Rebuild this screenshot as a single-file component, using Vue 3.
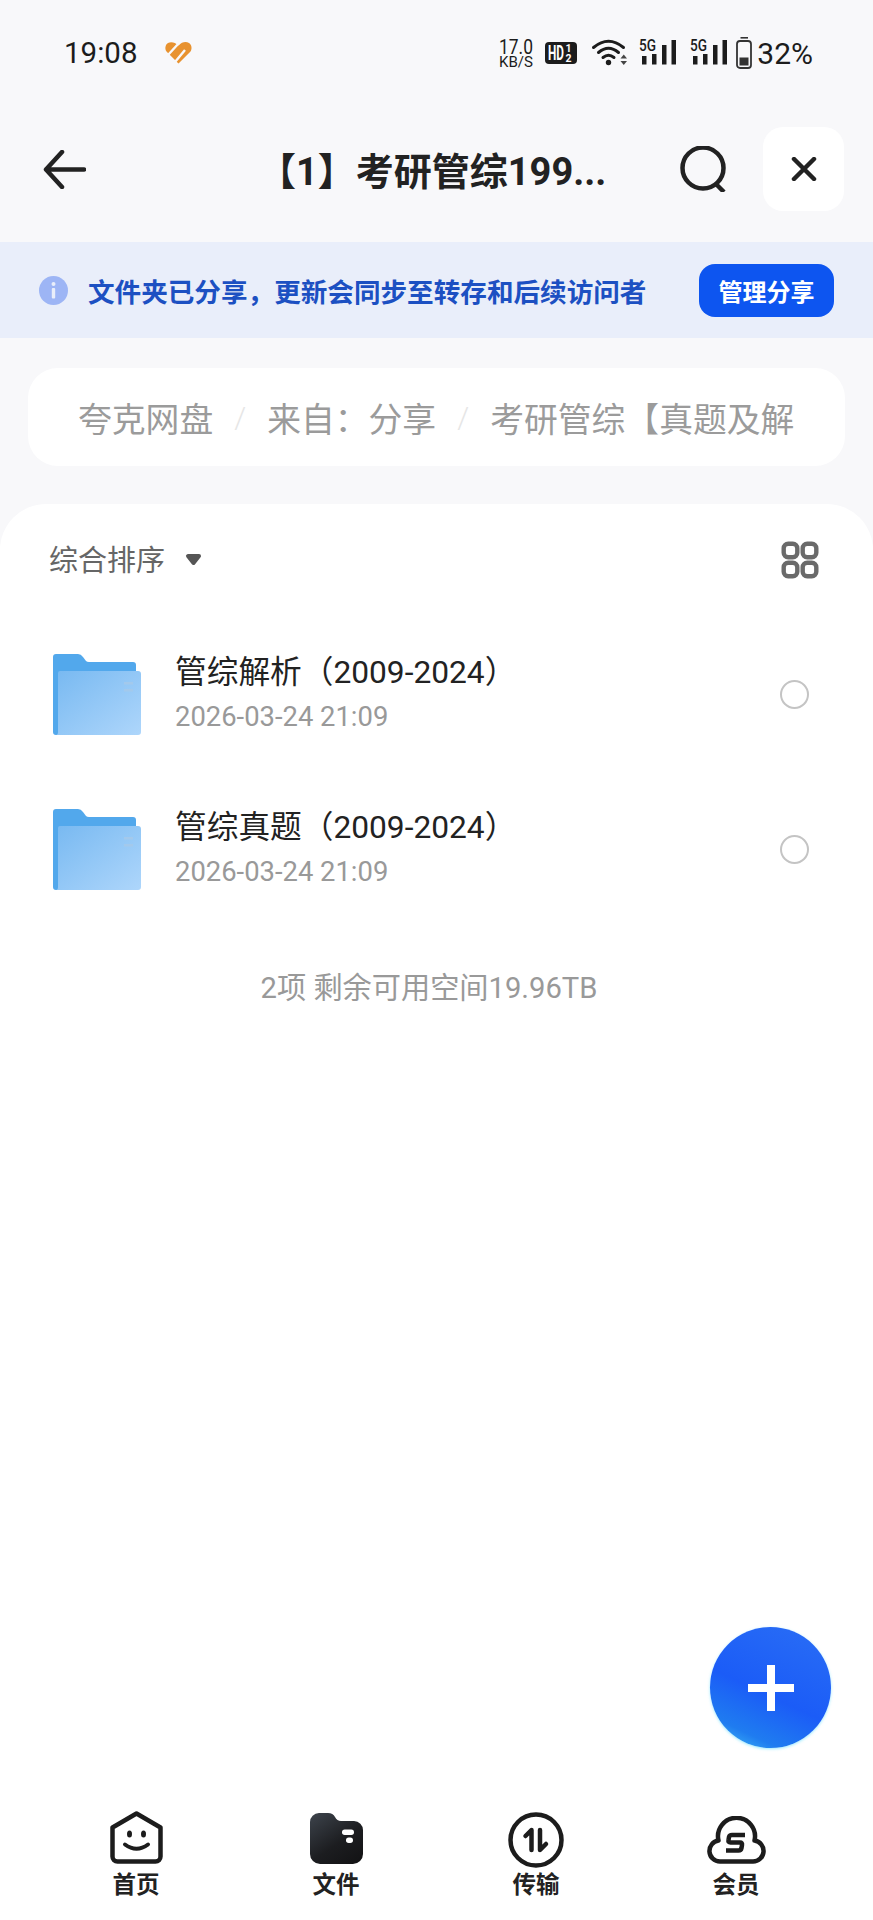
<script setup>
const crumbs = ['夸克网盘', '来自：分享', '考研管综【真题及解']
const folders = [
  { name: '管综解析（2009-2024）', date: '2026-03-24 21:09' },
  { name: '管综真题（2009-2024）', date: '2026-03-24 21:09' }
]
</script>

<template>
  <div class="page">
    <div class="status">
      <span class="time">19:08</span>
      <svg class="heart" width="27" height="22" viewBox="0 0 27 22">
        <path d="M13.5 21.5 1.5 9.5C-.5 7 .3 2.5 3 1c3-1.700 7-.8 10.500 2.500C17-.3 21-.9 24 1c2.800 1.800 3.300 6 1.500 8.500Z" fill="#e8922f" />
        <path d="M3 13 14 1M10 20 20 8" stroke="#f8f8fa" stroke-width="2.400" />
      </svg>
      <svg class="speed" width="36" height="30" viewBox="0 0 36 30">
        <text x="1" y="16" font-size="21" fill="#1c1c1c" textLength="34" lengthAdjust="spacingAndGlyphs">17.0</text>
        <text x="1" y="29" font-size="15" fill="#1c1c1c" textLength="34" lengthAdjust="spacingAndGlyphs">KB/S</text>
      </svg>
      <svg class="hd" width="32" height="22" viewBox="0 0 32 22">
        <rect width="32" height="22" rx="4" fill="#1c1c1c" />
        <text x="3" y="18" font-size="20" font-weight="700" fill="#fff" textLength="16" lengthAdjust="spacingAndGlyphs">HD</text>
        <text x="20.500" y="10" font-size="10.500" font-weight="700" fill="#fff">1</text>
        <text x="20.500" y="20" font-size="10.500" font-weight="700" fill="#fff">2</text>
      </svg>
      <svg class="wifi" width="36" height="28" viewBox="0 0 36 28">
        <g fill="none" stroke="#1c1c1c" stroke-width="3" stroke-linecap="round">
          <path d="M1.500 9.500Q16.500-3 31.500 9.500" />
          <path d="M6.500 14.500Q16.500 6 26.500 14.500" />
          <path d="M11 19.500Q16.500 15 22 19.500" />
        </g>
        <circle cx="16.500" cy="24.500" r="2.700" fill="#1c1c1c" />
        <path d="M28.500 20.500h6.500l-3.250-4ZM28.500 23h6.500l-3.250 4Z" fill="#444" />
      </svg>
      <svg v-for="n in 2" :key="n" class="signal" width="38" height="28" viewBox="0 0 38 28">
        <text x="0" y="13" font-size="17" font-weight="500" fill="#1c1c1c" textLength="17" lengthAdjust="spacingAndGlyphs">5G</text>
        <g fill="#1c1c1c">
          <rect x="3" y="18" width="4.500" height="8.500" />
          <rect x="13" y="16" width="4.500" height="10.500" />
          <rect x="23" y="7" width="4.500" height="19.500" />
          <rect x="32.500" y="2" width="4.500" height="24.500" />
        </g>
      </svg>
      <svg class="battery" width="16" height="32" viewBox="0 0 16 32">
        <rect x="4.500" y="0" width="7.500" height="1.600" fill="#333" />
        <rect x="1" y="4" width="14" height="27" rx="3" fill="none" stroke="#333" stroke-width="1.800" />
        <rect x="3.500" y="20.500" width="9" height="8" fill="#333" />
      </svg>
      <span class="percent">32%</span>
    </div>

    <header class="header">
      <svg class="back" width="43" height="39" viewBox="0 0 43 39">
        <path d="M41 19.500H3M19 2 3 19.500 19 37" fill="none" stroke="#222" stroke-width="4.500" stroke-linecap="round" stroke-linejoin="round" />
      </svg>
      <h1 class="title">【1】考研管综199...</h1>
      <svg class="search" width="47" height="46" viewBox="0 0 47 46">
        <circle cx="23" cy="22" r="20.500" fill="none" stroke="#222" stroke-width="4.500" />
        <path d="M36 38l8 8" stroke="#222" stroke-width="4.500" />
      </svg>
      <div class="close">
        <svg width="26" height="24" viewBox="0 0 26 24">
          <path d="M3 2l20 20M23 2 3 22" stroke="#222" stroke-width="4.500" stroke-linecap="round" />
        </svg>
      </div>
    </header>

    <div class="banner">
      <svg class="info" width="29" height="29" viewBox="0 0 29 29">
        <circle cx="14.500" cy="14.500" r="14.500" fill="#9db5f5" />
        <rect x="12.800" y="12" width="3.400" height="10.500" rx="1" fill="#e9eefa" />
        <circle cx="14.500" cy="8" r="2" fill="#e9eefa" />
      </svg>
      <span class="banner-text">文件夹已分享，更新会同步至转存和后续访问者</span>
      <button type="button" class="manage">管理分享</button>
    </div>

    <nav class="crumbs">
      <template v-for="(c, i) in crumbs" :key="c">
        <span v-if="i > 0" class="sep">/</span>
        <span class="crumb">{{ c }}</span>
      </template>
    </nav>

    <main class="card">
      <div class="sort-row">
        <span class="sort-label">综合排序</span>
        <svg class="sort-arrow" width="17" height="13" viewBox="0 0 17 13">
          <path d="M3 3H14L8.500 10Z" fill="#555" stroke="#555" stroke-width="4" stroke-linejoin="round" />
        </svg>
        <svg class="grid-icon" width="40" height="40" viewBox="0 0 40 40">
          <g fill="none" stroke="#6a6a6a" stroke-width="4.400">
            <rect x="3.700" y="3.700" width="13.600" height="13.600" rx="4.500" />
            <rect x="22.700" y="3.700" width="13.600" height="13.600" rx="4.500" />
            <rect x="3.700" y="22.700" width="13.600" height="13.600" rx="4.500" />
            <rect x="22.700" y="22.700" width="13.600" height="13.600" rx="4.500" />
          </g>
        </svg>
      </div>

      <div v-for="f in folders" :key="f.name" class="row">
        <svg class="folder" width="88" height="81" viewBox="0 0 88 81">
          <defs>
            <linearGradient id="front" x1="0" y1="0" x2="1" y2="1">
              <stop offset="0" stop-color="#78b9f1" />
              <stop offset="1" stop-color="#aed6fb" />
            </linearGradient>
          </defs>
          <path d="M3 0H25Q28 0 30 3L33 7Q34 8 36 8H80Q83 8 83 11V30H6V81H3Q0 81 0 78V3Q0 0 3 0Z" fill="#52a8ec" />
          <path d="M7 17H85Q88 17 88 20V78Q88 81 85 81H3Q5 81 5 78V19Q5 17 7 17Z" fill="url(#front)" />
          <rect x="71" y="28" width="9" height="2.500" fill="#a3c9ec" />
          <rect x="71" y="35" width="9" height="2.500" fill="#a3c9ec" />
        </svg>
        <div class="row-text">
          <div class="row-name">{{ f.name }}</div>
          <div class="row-date">{{ f.date }}</div>
        </div>
        <span class="radio"></span>
      </div>

      <p class="summary">2项 剩余可用空间19.96TB</p>

      <footer class="tabs">
        <div class="tab">
          <div class="tab-icon">
            <svg width="53" height="53" viewBox="0 0 53 53">
              <path d="M26.500 2.500 50.500 16.500V45.500A5 5 0 0 1 45.500 50.500H7.500A5 5 0 0 1 2.500 45.500V16.500Z" fill="none" stroke="#1c1c1c" stroke-width="4.500" stroke-linejoin="round" />
              <ellipse cx="19.500" cy="23" rx="2.500" ry="3.500" fill="#1c1c1c" />
              <ellipse cx="33.500" cy="23" rx="2.500" ry="3.500" fill="#1c1c1c" />
              <path d="M15 33.500Q26.500 42 38 33.500" fill="none" stroke="#1c1c1c" stroke-width="4" stroke-linecap="round" />
            </svg>
          </div>
          <span class="tab-label">首页</span>
        </div>
        <div class="tab">
          <div class="tab-icon">
            <svg width="53" height="51" viewBox="0 0 53 51">
              <defs>
                <linearGradient id="wallet" x1="0.100" y1="0" x2="0.800" y2="1">
                  <stop offset="0" stop-color="#3b4149" />
                  <stop offset="0.600" stop-color="#1c1d20" />
                  <stop offset="1" stop-color="#141416" />
                </linearGradient>
              </defs>
              <path d="M9 0H18Q23 0 25 4Q27 8 31 8H44A9 9 0 0 1 53 17V41A10 10 0 0 1 43 51H10A10 10 0 0 1 0 41V9A9 9 0 0 1 9 0Z" fill="url(#wallet)" />
              <rect x="32" y="16.500" width="12" height="5.500" rx="2.700" fill="#fff" />
              <rect x="36" y="24.500" width="7" height="5.500" rx="2.700" fill="#fff" />
            </svg>
          </div>
          <span class="tab-label">文件</span>
        </div>
        <div class="tab">
          <div class="tab-icon">
            <svg class="transfer" width="56" height="56" viewBox="0 0 56 56">
              <circle cx="28" cy="28" r="25.500" fill="none" stroke="#1c1c1c" stroke-width="4.500" />
              <path d="M23.500 38V18L17.500 24M32 18V38L38 32" fill="none" stroke="#1c1c1c" stroke-width="4.500" stroke-linecap="round" stroke-linejoin="round" />
            </svg>
          </div>
          <span class="tab-label">传输</span>
        </div>
        <div class="tab">
          <div class="tab-icon">
            <svg width="59" height="48" viewBox="0 0 59 48">
              <path d="M13 45.500H46A10.500 10.500 0 0 0 47.500 24.600A18.500 18.500 0 1 0 11.500 24.600A10.500 10.500 0 0 0 13 45.500Z" fill="none" stroke="#1c1c1c" stroke-width="4.500" stroke-linejoin="round" />
              <path d="M38 19H25Q22.500 19 22 21L21.500 24Q21 26.500 23.500 26.500H33Q35.500 26.500 35 29L34.500 32Q34 34.500 31.500 34.500H19" fill="none" stroke="#1c1c1c" stroke-width="4.500" />
            </svg>
          </div>
          <span class="tab-label">会员</span>
        </div>
      </footer>
    </main>

    <button type="button" class="fab" aria-label="add">
      <svg width="46" height="46" viewBox="0 0 46 46">
        <path d="M23 0V46M0 23H46" stroke="#fff" stroke-width="8" />
      </svg>
    </button>
  </div>
</template>

<style scoped>
.page {
  position: relative;
  display: flex;
  flex-direction: column;
  width: 873px;
  height: 1920px;
  overflow: hidden;
  background: #f8f8fa;
  font-family: Roboto, "Noto Sans CJK SC", sans-serif;
}

.status {
  display: flex;
  align-items: center;
  height: 100px;
  padding: 6px 60px 0 64px;
  box-sizing: border-box;
  color: #1c1c1c;
}

.status svg {
  overflow: visible;
}

.status text {
  font-family: Roboto, sans-serif;
}

.time {
  font-size: 29.500px;
  width: 71px;
}

.heart {
  margin-left: 30px;
}

.speed {
  margin-left: auto;
}

.hd {
  margin-left: 11px;
}

.wifi {
  margin-left: 15px;
  margin-top: -3px;
}

.signal {
  margin-left: 11px;
  margin-top: -3px;
}

.signal + .signal {
  margin-left: 13px;
}

.battery {
  margin-left: 8px;
}

.percent {
  margin-left: 5px;
  font-size: 30px;
}

.header {
  display: flex;
  align-items: center;
  height: 142px;
  padding: 0 29px 4px 43px;
  box-sizing: border-box;
}

.title {
  margin: 6px 0 0 172px;
  font-size: 38px;
  line-height: 44px;
  font-weight: 700;
  color: #222;
  white-space: nowrap;
}

.search {
  margin-left: auto;
}

.close {
  display: flex;
  align-items: center;
  justify-content: center;
  width: 81px;
  height: 84px;
  margin-left: 36px;
  border-radius: 20px;
  background: #fff;
}

.banner {
  display: flex;
  align-items: center;
  height: 96px;
  padding: 0 39px;
  background: #e9eefa;
}

.info {
  flex: none;
}

.banner-text {
  margin-left: 20px;
  font-size: 26.600px;
  font-weight: 700;
  color: #1c50c2;
  white-space: nowrap;
}

.manage {
  flex: none;
  width: 135px;
  height: 53px;
  margin-left: auto;
  padding: 0;
  border: 0;
  border-radius: 16px;
  background: #0d55f0;
  color: #fff;
  font-family: inherit;
  font-size: 24px;
  font-weight: 700;
}

.crumbs {
  display: flex;
  align-items: center;
  gap: 20px;
  height: 98px;
  margin: 30px 28px 0;
  padding-left: 50px;
  border-radius: 30px;
  background: #fff;
  white-space: nowrap;
  overflow: hidden;
}

.crumb {
  font-size: 33.800px;
  color: #9b9b9b;
}

.sep {
  width: 14px;
  font-size: 30px;
  font-weight: 300;
  color: #e6e6e6;
  text-align: center;
}

.card {
  display: flex;
  flex: 1;
  flex-direction: column;
  margin-top: 38px;
  padding-top: 30px;
  border-radius: 46px 46px 0 0;
  background: #fff;
}

.sort-row {
  display: flex;
  align-items: center;
  height: 48px;
  margin-bottom: 35px;
  padding: 0 53px 0 49px;
}

.sort-label {
  font-size: 29px;
  color: #666;
}

.sort-arrow {
  margin: 2px 0 0 20px;
}

.grid-icon {
  margin: 4px 0 0 auto;
}

.row {
  display: flex;
  align-items: center;
  height: 155px;
  padding: 0 64px 0 53px;
}

.row-text {
  flex: 1;
  margin-left: 34px;
}

.row-name {
  font-size: 31.700px;
  line-height: 45px;
  color: #222;
}

.row-date {
  font-size: 27.400px;
  line-height: 45px;
  color: #999;
}

.radio {
  width: 29px;
  height: 29px;
  box-sizing: border-box;
  border: 2px solid #c4c4c4;
  border-radius: 50%;
}

.summary {
  margin: 40px 0 0;
  padding-right: 15px;
  font-size: 29.200px;
  line-height: 42px;
  color: #999;
  text-align: center;
}

.tabs {
  display: grid;
  grid-template-columns: repeat(4, 200px);
  margin-top: auto;
  padding: 0 36px 20px;
}

.tab {
  display: flex;
  flex-direction: column;
  align-items: center;
}

.tab-icon {
  display: flex;
  align-items: flex-end;
  height: 53px;
}

.transfer {
  margin-bottom: -4px;
}

.tab-label {
  margin-top: 6px;
  font-size: 23.500px;
  line-height: 30px;
  font-weight: 700;
  color: #222;
}

.fab {
  position: absolute;
  right: 42px;
  bottom: 172px;
  display: flex;
  align-items: center;
  justify-content: center;
  width: 121px;
  height: 121px;
  padding: 0;
  border: 0;
  border-radius: 50%;
  background: linear-gradient(205deg, #2a6ef5 0%, #1b5cf7 55%, #1f7cf0 82%, #45c8f7 100%);
  box-shadow: 0 1px 3px rgba(110, 225, 255, 0.7);
}
</style>

<style>
html,
body {
  margin: 0;
  background: #fff;
}
</style>
